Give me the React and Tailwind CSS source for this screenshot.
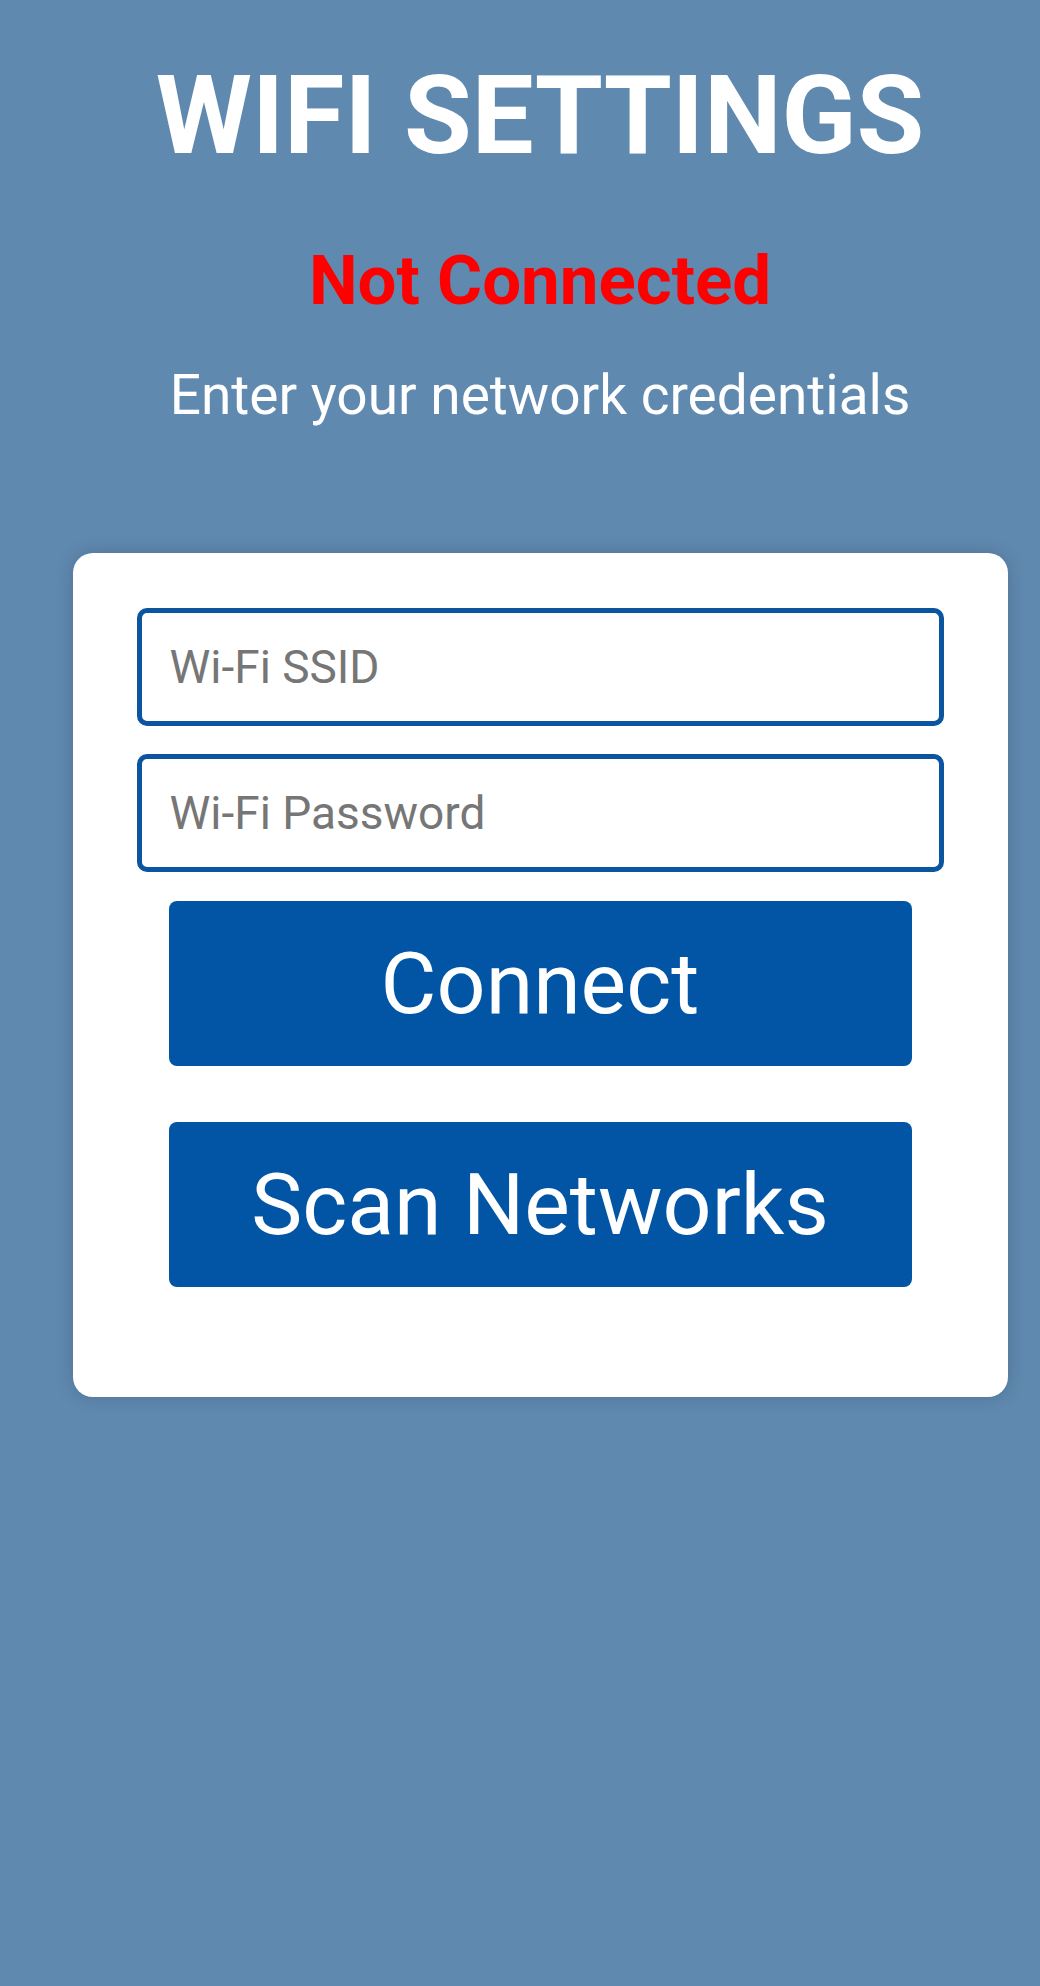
export default function App() {
  return (
    <div className="min-h-screen bg-[#6089b0] pl-[40px] font-['Roboto',sans-serif]">
      <div className="flex flex-col items-center text-center">
        <h1 className="mt-[61px] text-[110px] leading-none font-bold text-white">WIFI SETTINGS</h1>
        <h2 className="mt-[75px] text-[69px] leading-none font-bold text-[#ff0000]">Not Connected</h2>
        <p className="mt-[53px] text-[55px] leading-none text-white">Enter your network credentials</p>
      </div>

      <div className="mx-auto mt-[130px] w-[935px] rounded-[20px] bg-white px-[64px] pt-[55px] pb-[110px] shadow-[0_0_18px_rgba(0,0,0,0.18)]">
        <div className="flex flex-col gap-[28px]">
          <input
            type="text"
            placeholder="Wi-Fi SSID"
            className="h-[118px] w-full rounded-[10px] border-[5px] border-[#0b55a0] bg-white pl-[28px] text-[46px] text-gray-800 outline-none placeholder:text-[#767676]"
          />
          <input
            type="password"
            placeholder="Wi-Fi Password"
            className="h-[118px] w-full rounded-[10px] border-[5px] border-[#0b55a0] bg-white pl-[28px] text-[46px] text-gray-800 outline-none placeholder:text-[#767676]"
          />
        </div>
        <div className="mx-[32px] mt-[29px] flex flex-col gap-[56px]">
          <button className="h-[165px] w-full rounded-[8px] bg-[#0255a5] text-[86px] leading-none text-white">
            Connect
          </button>
          <button className="h-[165px] w-full rounded-[8px] bg-[#0255a5] text-[86px] leading-none text-white">
            Scan Networks
          </button>
        </div>
      </div>
    </div>
  );
}
